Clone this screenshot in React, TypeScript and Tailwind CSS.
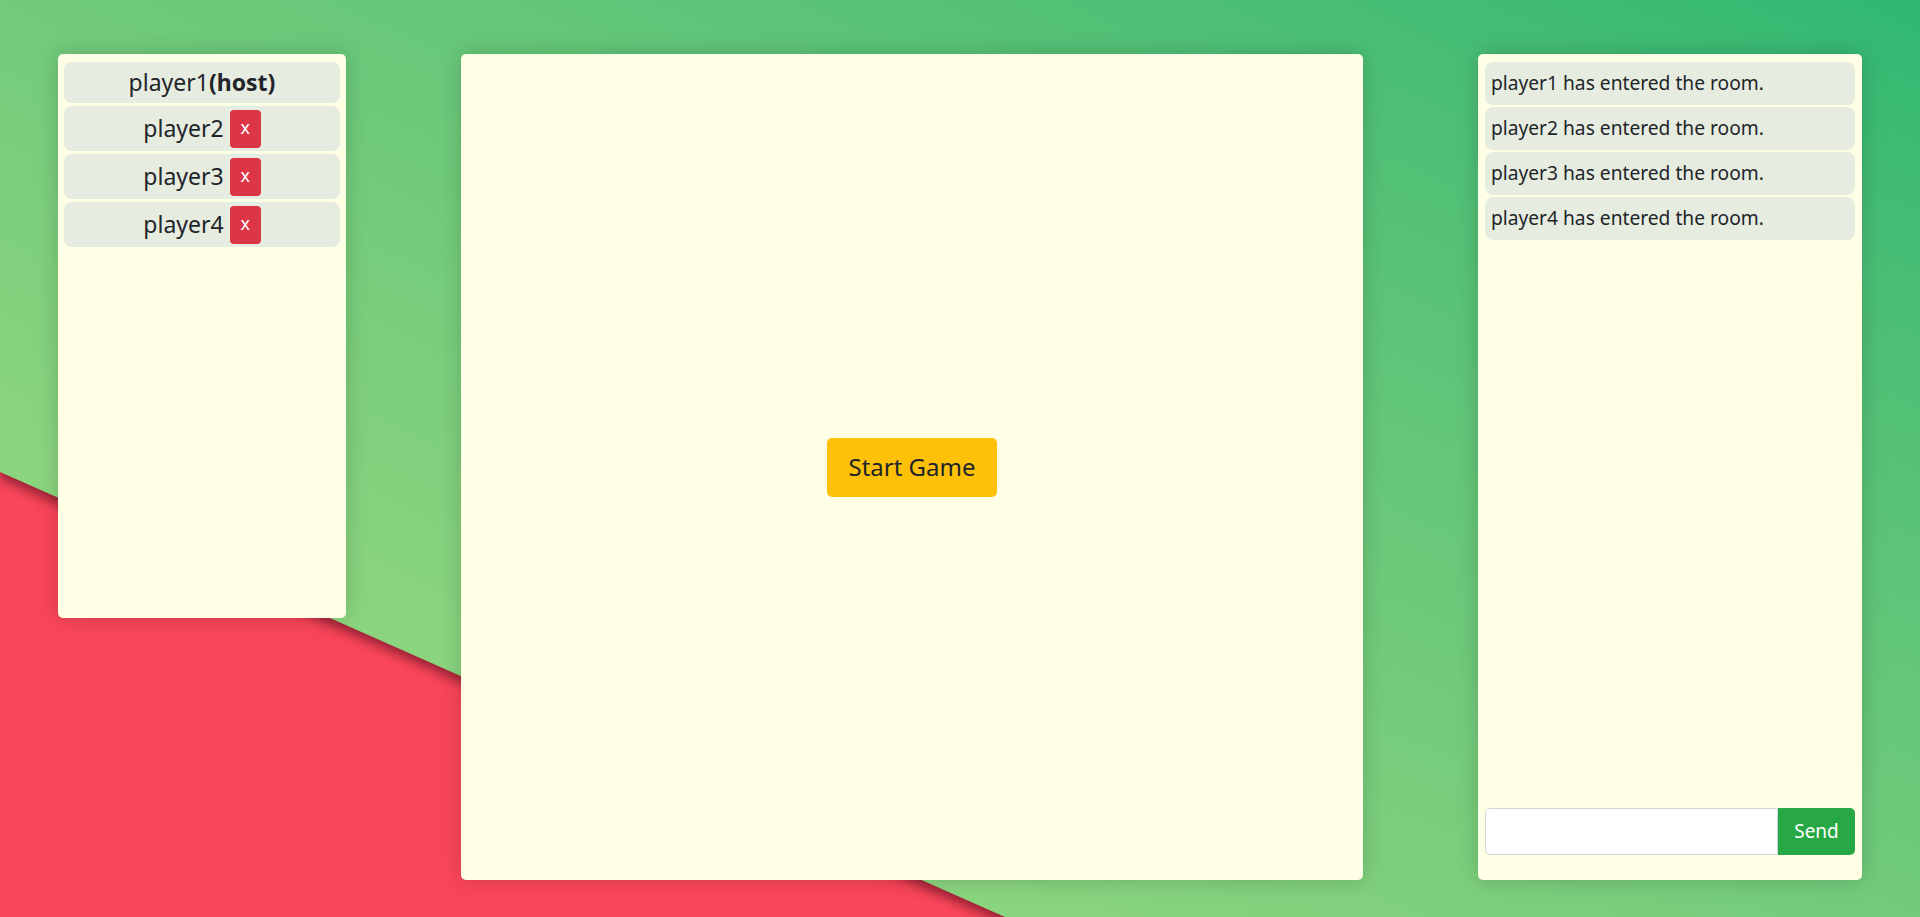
import { useState } from 'react';

const players = [
  { name: 'player1', host: true },
  { name: 'player2', host: false },
  { name: 'player3', host: false },
  { name: 'player4', host: false },
];

const messages = [
  'player1 has entered the room.',
  'player2 has entered the room.',
  'player3 has entered the room.',
  'player4 has entered the room.',
];

export default function App() {
  const [text, setText] = useState('');

  return (
    <div className="relative min-h-[917px] h-[917px] overflow-hidden bg-[#fa4659] font-['Noto_Sans',sans-serif] text-[#212529]">
      {/* background: green gradient cut diagonally over the red */}
      <div className="absolute inset-0 [filter:drop-shadow(0_6px_6px_rgba(60,0,20,0.55))]">
        <div className="absolute inset-0 bg-gradient-to-tr from-[#a3de83] to-[#2eb872] [clip-path:polygon(0_0,100%_0,100%_100%,1005px_100%,0_472px)]" />
      </div>

      <div className="relative flex items-start justify-between px-[58px] pt-[54px]">
        {/* players */}
        <div className="flex h-[564px] w-[288px] flex-col gap-[3px] rounded-[5px] bg-[#feffe4] px-[6px] pt-[8px] shadow-[0_0_22px_rgba(0,0,0,0.18)]">
          {players.map((p) =>
            p.host ? (
              <div key={p.name} className="flex h-[41px] items-center justify-center rounded-lg bg-[#e7ece1] text-[23px]">
                {p.name}
                <b>(host)</b>
              </div>
            ) : (
              <div key={p.name} className="flex h-[45px] items-center justify-center gap-[6px] rounded-lg bg-[#e7ece1] text-[23px]">
                <span>{p.name}</span>
                <button className="flex h-[38px] w-[31px] items-center justify-center rounded bg-[#dc3545] pb-[3px] text-[18px] text-white">
                  x
                </button>
              </div>
            )
          )}
        </div>

        {/* game */}
        <div className="flex h-[826px] w-[902px] items-center justify-center rounded-[5px] bg-[#feffe4] shadow-[0_0_22px_rgba(0,0,0,0.18)]">
          <button className="h-[59px] w-[170px] rounded-[5px] bg-[#ffc107] text-[24px] text-[#212529]">
            Start Game
          </button>
        </div>

        {/* chat */}
        <div className="flex h-[826px] w-[384px] flex-col rounded-[5px] bg-[#feffe4] px-[7px] pt-[8px] pb-[25px] shadow-[0_0_22px_rgba(0,0,0,0.18)]">
          <div className="flex flex-1 flex-col gap-[2px]">
            {messages.map((m) => (
              <div key={m} className="flex h-[43px] items-center rounded-lg bg-[#e7ece1] px-[6px] text-[19.2px]">
                {m}
              </div>
            ))}
          </div>
          <div className="flex h-[47px]">
            <input
              value={text}
              onChange={(e) => setText(e.target.value)}
              className="h-full flex-1 rounded-l-[5px] border border-[#ced4da] bg-white px-3 outline-none"
            />
            <button className="h-full w-[77px] rounded-r-[5px] bg-[#28a745] text-[19px] text-white">Send</button>
          </div>
        </div>
      </div>
    </div>
  );
}
